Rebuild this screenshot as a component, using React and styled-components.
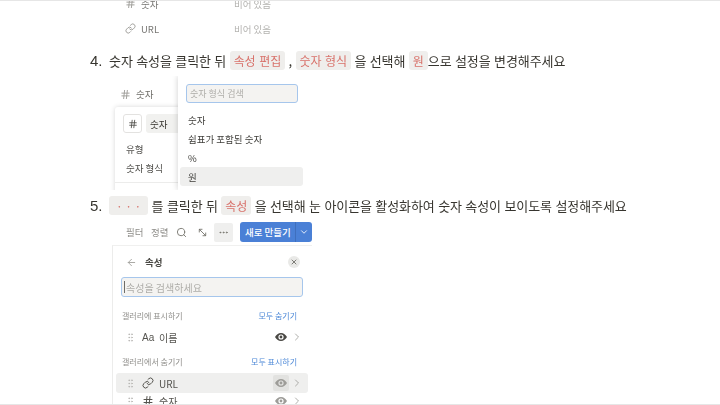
import React from 'react';
import styled, { createGlobalStyle } from 'styled-components';
import {
  ArrowLeft,
  ChevronDown,
  ChevronRight,
  GripVertical,
  Hash,
  Link,
  MoreHorizontal,
  MoveDiagonal2,
  Search,
  X,
} from 'lucide-react';

const FONT = '"Noto Sans CJK KR", "Noto Sans", sans-serif';

const GlobalStyle = createGlobalStyle`
  html, body {
    margin: 0;
    padding: 0;
    background: #fff;
  }
  body {
    font-family: ${FONT};
    color: #37352f;
  }
`;

const Page = styled.div`
  box-sizing: border-box;
  width: 720px;
  height: 405px;
  overflow: hidden;
  padding-left: 90px;
  border-top: 1px solid #e6e6e6;
  border-bottom: 1px solid #e6e6e6;
  filter: blur(0.35px);
`;

const PropertyList = styled.div`
  margin-top: -10px;
  padding-left: 35px;
`;

const PropertyRow = styled.div`
  display: flex;
  align-items: center;
  height: 25px;
  font-size: 9.5px;
  color: #8b8a86;
`;

const PropertyName = styled.span`
  display: flex;
  align-items: center;
  gap: 5px;
  width: 109px;
  color: #787774;
`;

const PropertyValue = styled.span`
  color: #b4b3b0;
`;

const Step = styled.div`
  display: flex;
  align-items: center;
  height: 20px;
  margin-top: ${({ $top }) => $top}px;
  font-size: 13px;
  letter-spacing: -0.08px;
  word-spacing: 0.6px;
  color: #37352f;
  white-space: pre;
`;

const StepNumber = styled.span`
  width: 19px;
  font-family: "Liberation Sans", sans-serif;
  font-size: 15px;
`;

const Code = styled.span`
  display: inline-flex;
  align-items: center;
  height: 19px;
  padding: 0 ${({ $pad = 4 }) => $pad}px;
  border-radius: 3px;
  background: #efeeec;
  color: #d8726b;
  font-size: 12px;
  word-spacing: ${({ $spacing = 1 }) => $spacing}px;
`;

const ShotOne = styled.div`
  position: relative;
  box-sizing: border-box;
  width: 195px;
  height: 114px;
  margin: 6px 0 0 20px;
  overflow: hidden;
`;

const ShotHeader = styled.div`
  display: flex;
  align-items: center;
  gap: 5px;
  box-sizing: border-box;
  height: 31px;
  padding: 5px 0 0 10px;
  font-size: 9.5px;
  color: #6f6e69;
`;

const BackPanel = styled.div`
  box-sizing: border-box;
  height: 90px;
  margin-left: 5px;
  padding: 7px 8px;
  border-radius: 3px;
  background: #fff;
  box-shadow: 0 0 5px rgba(15, 15, 15, 0.16);
`;

const NameRow = styled.div`
  display: flex;
  gap: 4px;
  margin-bottom: 7px;
`;

const IconBox = styled.span`
  display: flex;
  align-items: center;
  justify-content: center;
  box-sizing: border-box;
  width: 19px;
  height: 19px;
  border: 1px solid #e3e2e0;
  border-radius: 3px;
`;

const NameField = styled.span`
  display: flex;
  align-items: center;
  flex: 1;
  height: 19px;
  padding-left: 4px;
  border-radius: 3px;
  background: #f1f1ef;
  font-size: 9.5px;
`;

const PanelLabel = styled.div`
  height: 19px;
  padding-left: 3px;
  font-size: 9.5px;
  line-height: 19px;
  color: #4f4e4a;
`;

const PanelDivider = styled.div`
  margin: 4px -8px 0;
  border-top: 1px solid #ececeb;
`;

const Dropdown = styled.div`
  position: absolute;
  top: 0;
  left: 68px;
  bottom: 0;
  width: 127px;
  padding: 8px 2px 0;
  box-sizing: border-box;
  background: #fff;
  box-shadow: 0 0 6px rgba(15, 15, 15, 0.2);
`;

const FocusInput = styled.div`
  display: flex;
  align-items: center;
  box-sizing: border-box;
  height: ${({ $height }) => $height}px;
  margin: ${({ $margin }) => $margin};
  padding-left: ${({ $pad = 2 }) => $pad}px;
  border: 1.5px solid #a6c6ec;
  border-radius: 3px;
  background: #f4f3f1;
  font-size: ${({ $size }) => $size}px;
  color: #aeada9;
`;

const Option = styled.div`
  display: flex;
  align-items: center;
  height: 19px;
  padding-left: 8px;
  border-radius: 3px;
  font-size: 9.5px;
  color: #3f3e3a;
  background: ${({ $active }) => ($active ? '#efefee' : 'transparent')};
`;

const ShotTwo = styled.div`
  width: 202px;
  margin: 7px 0 0 20px;
`;

const Toolbar = styled.div`
  display: flex;
  align-items: center;
  height: 20px;
  padding-left: 16px;
  font-size: 9.5px;
  color: #8f8e8a;
  white-space: nowrap;
`;

const ToolLabel = styled.span`
  width: 16px;
  margin-right: ${({ $gap }) => $gap}px;
`;

const ToolIcon = styled.span`
  display: flex;
  align-items: center;
  justify-content: center;
  width: 19px;
  height: 19px;
  margin-right: ${({ $gap = 0 }) => $gap}px;
  border-radius: 2px;
  background: ${({ $active }) => ($active ? '#efefee' : 'transparent')};
  color: #77766f;
`;

const NewButton = styled.div`
  display: flex;
  align-items: stretch;
  height: 20px;
  margin-left: 7px;
  border-radius: 3px;
  background: #4a80d6;
  color: #fff;
  font-size: 9.5px;
  font-weight: 500;
`;

const NewLabel = styled.span`
  display: flex;
  align-items: center;
  width: 55px;
  padding-left: 5px;
  box-sizing: border-box;
`;

const NewCaret = styled.span`
  display: flex;
  align-items: center;
  justify-content: center;
  flex: 1;
  width: 16px;
  border-left: 1px solid #3f6fbd;
`;

const Panel = styled.div`
  margin: 3px 0 0 2px;
  padding: 7px 4px 0 3px;
  border-top: 1px solid #f0f0ef;
  border-left: 1px solid #ececeb;
`;

const PanelHeader = styled.div`
  display: flex;
  align-items: center;
  height: 18px;
  padding: 0 8px 0 10px;
  font-size: 9.5px;
  font-weight: 700;
  color: #4a4945;
`;

const BackIcon = styled(ArrowLeft)`
  margin-right: 8px;
  color: #a3a29e;
`;

const CloseBadge = styled.span`
  display: flex;
  align-items: center;
  justify-content: center;
  width: 12px;
  height: 12px;
  margin-left: auto;
  border-radius: 50%;
  background: #e9e9e7;
  color: #66655f;
`;

const Caret = styled.span`
  width: 1px;
  height: 12px;
  margin-right: 1px;
  background: #6e6d68;
`;

const SectionHead = styled.div`
  display: flex;
  align-items: center;
  justify-content: space-between;
  height: 14px;
  margin-top: ${({ $top }) => $top}px;
  padding: 0 11px 0 6px;
  font-size: 8px;
  color: #8f8e8a;
`;

const SectionAction = styled.span`
  color: #4f8ad8;
`;

const PropRow = styled.div`
  display: flex;
  align-items: center;
  height: ${({ $height = 20 }) => $height}px;
  margin-top: ${({ $top = 0 }) => $top}px;
  padding: 0 5px 0 9px;
  border-radius: 3px;
  background: ${({ $active }) => ($active ? '#efefee' : 'transparent')};
  font-size: 10px;
  color: #55544f;
`;

const RowIcon = styled.span`
  display: flex;
  align-items: center;
  width: 15px;
  margin-left: 6px;
  font-family: "Liberation Sans", sans-serif;
`;

const RowName = styled.span`
  margin-left: 2px;
`;

const EyeBox = styled.span`
  display: flex;
  align-items: center;
  justify-content: center;
  width: 16px;
  height: 16px;
  margin-left: auto;
  border-radius: 2px;
  background: ${({ $active }) => ($active ? '#e2e2e0' : 'transparent')};
`;

const Chevron = styled(ChevronRight)`
  margin-left: 2px;
  color: #9b9a96;
`;

function EyeIcon({ color }) {
  return (
    <svg width="12" height="8" viewBox="0 0 12 8">
      <path
        d="M6 0C3.3 0 1.2 1.7 0 4c1.2 2.3 3.3 4 6 4s4.8-1.7 6-4C10.8 1.7 8.7 0 6 0zm0 6.6A2.6 2.6 0 1 1 6 1.4a2.6 2.6 0 0 1 0 5.2z"
        fill={color}
      />
      <circle cx="6" cy="4" r="1.4" fill={color} />
    </svg>
  );
}

function Property({ icon, label, hidden, active, top, height }) {
  return (
    <PropRow $active={active} $top={top} $height={height}>
      <GripVertical size={11} color="#b5b4b0" strokeWidth={1.6} />
      <RowIcon>{icon}</RowIcon>
      <RowName>{label}</RowName>
      <EyeBox $active={active}>
        <EyeIcon color={hidden ? '#9d9c98' : '#4a4945'} />
      </EyeBox>
      <Chevron size={12} strokeWidth={1.6} />
    </PropRow>
  );
}

export default function App() {
  return (
    <>
      <GlobalStyle />
      <Page>
        <PropertyList>
          <PropertyRow>
            <PropertyName>
              <Hash size={11} color="#9b9a96" />
              숫자
            </PropertyName>
            <PropertyValue>비어 있음</PropertyValue>
          </PropertyRow>
          <PropertyRow>
            <PropertyName>
              <Link size={11} color="#9b9a96" />
              URL
            </PropertyName>
            <PropertyValue>비어 있음</PropertyValue>
          </PropertyRow>
        </PropertyList>

        <Step $top={9}>
          <StepNumber>4.</StepNumber>
          숫자 속성을 클릭한 뒤 <Code>속성 편집</Code> , <Code>숫자 형식</Code> 을 선택해 <Code>원</Code>으로 설정을 변경해주세요
        </Step>

        <ShotOne>
          <ShotHeader>
            <Hash size={11} color="#9b9a96" />
            숫자
          </ShotHeader>
          <BackPanel>
            <NameRow>
              <IconBox>
                <Hash size={10} color="#4a4945" />
              </IconBox>
              <NameField>숫자</NameField>
            </NameRow>
            <PanelLabel>유형</PanelLabel>
            <PanelLabel>숫자 형식</PanelLabel>
            <PanelDivider />
          </BackPanel>
          <Dropdown>
            <FocusInput $height={19} $margin="0 5px 7px 6px" $size={9} $pad={3}>
              숫자 형식 검색
            </FocusInput>
            <Option>숫자</Option>
            <Option>쉼표가 포함된 숫자</Option>
            <Option>%</Option>
            <Option $active>원</Option>
          </Dropdown>
        </ShotOne>

        <Step $top={5}>
          <StepNumber>5.</StepNumber>
          <Code $pad={7} $spacing={0}>· · ·</Code> 를 클릭한 뒤 <Code>속성</Code> 을 선택해 눈 아이콘을 활성화하여 숫자 속성이 보이도록 설정해주세요
        </Step>

        <ShotTwo>
          <Toolbar>
            <ToolLabel $gap={9}>필터</ToolLabel>
            <ToolLabel $gap={5}>정렬</ToolLabel>
            <ToolIcon $gap={2}>
              <Search size={11} />
            </ToolIcon>
            <ToolIcon $gap={2}>
              <MoveDiagonal2 size={11} />
            </ToolIcon>
            <ToolIcon $active>
              <MoreHorizontal size={11} />
            </ToolIcon>
            <NewButton>
              <NewLabel>새로 만들기</NewLabel>
              <NewCaret>
                <ChevronDown size={10} />
              </NewCaret>
            </NewButton>
          </Toolbar>
          <Panel>
            <PanelHeader>
              <BackIcon size={11} />
              속성
              <CloseBadge>
                <X size={8} strokeWidth={2.5} />
              </CloseBadge>
            </PanelHeader>
            <FocusInput $height={20} $margin="6px 5px 0" $size={10}>
              <Caret />
              속성을 검색하세요
            </FocusInput>
            <SectionHead $top={11}>
              <span>갤러리에 표시하기</span>
              <SectionAction>모두 숨기기</SectionAction>
            </SectionHead>
            <Property icon="Aa" label="이름" top={4} height={22} />
            <SectionHead $top={6}>
              <span>갤러리에서 숨기기</span>
              <SectionAction>모두 표시하기</SectionAction>
            </SectionHead>
            <Property icon={<Link size={12} />} label="URL" hidden active top={5} />
            <Property icon={<Hash size={12} />} label="숫자" hidden top={-2} />
          </Panel>
        </ShotTwo>
      </Page>
    </>
  );
}
